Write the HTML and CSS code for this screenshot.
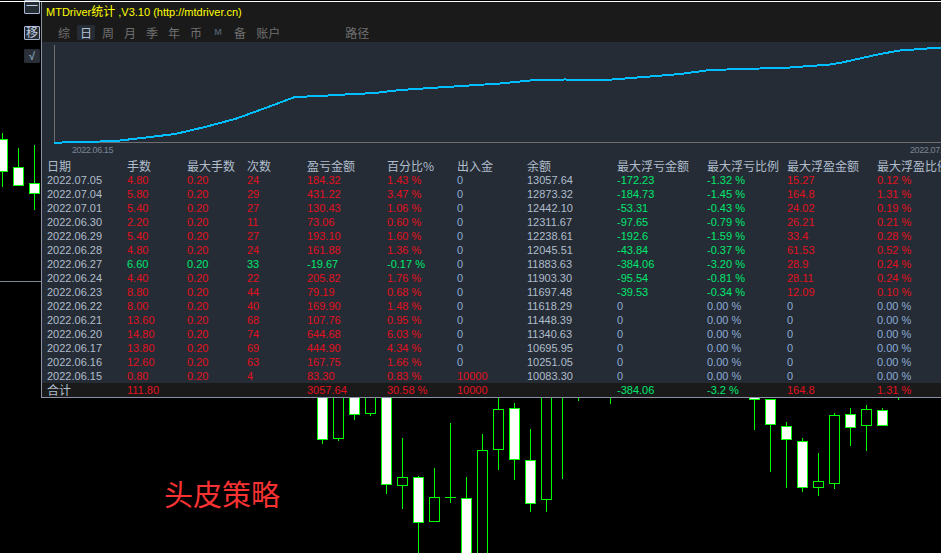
FILE: index.html
```html
<!DOCTYPE html>
<html lang="zh">
<head>
<meta charset="utf-8">
<title>MTDriver统计</title>
<link rel="stylesheet" href="styles.css">
</head>
<body>
<svg class="market" width="941" height="553" viewBox="0 0 941 553">
  <g class="wicks">
    <path d="M2.5 133V187M18.5 148V167M18.5 185V185M34.5 145V183M34.5 193V210"/>
    <path d="M322.5 439V444M338.5 438V441M354.5 414V420M370.5 413V416M386.5 484V494"/>
    <path d="M402.5 438V477M402.5 485V509M418.5 476V477M418.5 522V553M434.5 468V497"/>
    <path d="M450.5 423V503M445 497.5H456M466.5 477V498M482.5 434V450M498.5 397V409M498.5 449V470"/>
    <path d="M514.5 403V408M514.5 459V480M530.5 429V460M530.5 503V512M546.5 499V512M562.5 397V479"/>
    <path d="M578.5 397V401M610.5 397V404M754.5 400V430M770.5 424V472M786.5 422V426M786.5 439V488"/>
    <path d="M802.5 438V441M802.5 487V492M818.5 453V481M818.5 487V496M834.5 413V415M834.5 483V489"/>
    <path d="M850.5 408V414M850.5 427V446M866.5 405V409M866.5 425V451M882.5 408V410M898.5 397V400"/>
  </g>
  <g class="bull">
    <rect x="-2.5" y="139.5" width="10" height="32"/><rect x="13.5" y="167.5" width="10" height="18"/><rect x="29.5" y="183.5" width="10" height="10"/>
    <rect x="317.5" y="390.5" width="10" height="49"/><rect x="349.5" y="390.5" width="10" height="24"/><rect x="381.5" y="390.5" width="10" height="94"/>
    <rect x="413.5" y="477.5" width="10" height="45"/><rect x="461.5" y="498.5" width="10" height="60"/><rect x="509.5" y="408.5" width="10" height="51"/>
    <rect x="525.5" y="460.5" width="10" height="43"/><rect x="749.5" y="390.5" width="10" height="9"/><rect x="765.5" y="399.5" width="10" height="25"/>
    <rect x="781.5" y="426.5" width="10" height="13"/><rect x="797.5" y="441.5" width="10" height="46"/><rect x="845.5" y="414.5" width="10" height="13"/>
    <rect x="877.5" y="410.5" width="10" height="15"/>
  </g>
  <g class="bear">
    <rect x="333.5" y="390.5" width="10" height="48"/><rect x="365.5" y="390.5" width="10" height="23"/><rect x="397.5" y="477.5" width="10" height="8"/>
    <rect x="429.5" y="497.5" width="10" height="24"/><rect x="477.5" y="450.5" width="10" height="110"/><rect x="493.5" y="409.5" width="10" height="40"/>
    <rect x="541.5" y="390.5" width="10" height="109"/><rect x="813.5" y="481.5" width="10" height="6"/><rect x="829.5" y="415.5" width="10" height="68"/>
    <rect x="861.5" y="409.5" width="10" height="16"/>
  </g>
  <path class="gridline" d="M0 281.5H41"/>
</svg>

<div class="topline"></div>

<div class="sidebtn sidebtn-min">一</div>
<div class="sidebtn sidebtn-move">移</div>
<div class="sidebtn sidebtn-check">√</div>

<div class="caption">头皮策略</div>

<section class="panel">
  <header class="titlebar">MTDriver<span class="title-cjk">统计</span> ,V3.10 (http://mtdriver.cn)</header>
  <nav class="tabs">
    <span class="tab">综</span><span class="tab tab-on">日</span><span class="tab">周</span><span class="tab">月</span><span class="tab">季</span><span class="tab">年</span><span class="tab">币</span><span class="tab tab-m">M</span><span class="tab">备</span><span class="tab">账户</span><span class="tab tab-path">路径</span>
  </nav>
  <div class="chart">
    <svg class="chart-svg" width="899" height="117" viewBox="42 42 899 117">
      <path class="axis" d="M54.5 45V142.5H941"/>
      <polyline class="curve" points="54,143 70,142 100,141.5 120,140.5 150,137 175,134 205,127 235,119 260,110 295,97 320,96 345,94.5 375,93 400,90 500,83.5 530,80.5 565,79.5 600,80.5 625,78.5 650,76.5 680,74 710,70 760,68.5 790,67.5 810,66 830,64.5 842,62.5 880,54 900,50.5 941,47.5"/>
      <text class="axis-label" x="72" y="153">2022.06.15</text>
      <text class="axis-label" x="910" y="153">2022.07.05</text>
    </svg>
  </div>
  <div class="table">
    <div class="row head"><span>日期</span><span>手数</span><span>最大手数</span><span>次数</span><span>盈亏金额</span><span>百分比%</span><span>出入金</span><span>余额</span><span>最大浮亏金额</span><span>最大浮亏比例</span><span>最大浮盈金额</span><span>最大浮盈比例</span></div>
    <div class="row"><span>2022.07.05</span><span class="r">4.80</span><span class="r">0.20</span><span class="r">24</span><span class="r">184.32</span><span class="r">1.43 %</span><span class="b">0</span><span>13057.64</span><span class="g">-172.23</span><span class="g">-1.32 %</span><span class="r">15.27</span><span class="r">0.12 %</span></div>
    <div class="row"><span>2022.07.04</span><span class="r">5.80</span><span class="r">0.20</span><span class="r">29</span><span class="r">431.22</span><span class="r">3.47 %</span><span class="b">0</span><span>12873.32</span><span class="g">-184.73</span><span class="g">-1.45 %</span><span class="r">164.8</span><span class="r">1.31 %</span></div>
    <div class="row"><span>2022.07.01</span><span class="r">5.40</span><span class="r">0.20</span><span class="r">27</span><span class="r">130.43</span><span class="r">1.06 %</span><span class="b">0</span><span>12442.10</span><span class="g">-53.31</span><span class="g">-0.43 %</span><span class="r">24.02</span><span class="r">0.19 %</span></div>
    <div class="row"><span>2022.06.30</span><span class="r">2.20</span><span class="r">0.20</span><span class="r">11</span><span class="r">73.06</span><span class="r">0.60 %</span><span class="b">0</span><span>12311.67</span><span class="g">-97.65</span><span class="g">-0.79 %</span><span class="r">26.21</span><span class="r">0.21 %</span></div>
    <div class="row"><span>2022.06.29</span><span class="r">5.40</span><span class="r">0.20</span><span class="r">27</span><span class="r">193.10</span><span class="r">1.60 %</span><span class="b">0</span><span>12238.61</span><span class="g">-192.6</span><span class="g">-1.59 %</span><span class="r">33.4</span><span class="r">0.28 %</span></div>
    <div class="row"><span>2022.06.28</span><span class="r">4.80</span><span class="r">0.20</span><span class="r">24</span><span class="r">161.88</span><span class="r">1.36 %</span><span class="b">0</span><span>12045.51</span><span class="g">-43.84</span><span class="g">-0.37 %</span><span class="r">61.53</span><span class="r">0.52 %</span></div>
    <div class="row"><span>2022.06.27</span><span class="g">6.60</span><span class="g">0.20</span><span class="g">33</span><span class="g">-19.67</span><span class="g">-0.17 %</span><span class="b">0</span><span>11883.63</span><span class="g">-384.06</span><span class="g">-3.20 %</span><span class="r">28.9</span><span class="r">0.24 %</span></div>
    <div class="row"><span>2022.06.24</span><span class="r">4.40</span><span class="r">0.20</span><span class="r">22</span><span class="r">205.82</span><span class="r">1.76 %</span><span class="b">0</span><span>11903.30</span><span class="g">-95.54</span><span class="g">-0.81 %</span><span class="r">28.11</span><span class="r">0.24 %</span></div>
    <div class="row"><span>2022.06.23</span><span class="r">8.80</span><span class="r">0.20</span><span class="r">44</span><span class="r">79.19</span><span class="r">0.68 %</span><span class="b">0</span><span>11697.48</span><span class="g">-39.53</span><span class="g">-0.34 %</span><span class="r">12.09</span><span class="r">0.10 %</span></div>
    <div class="row"><span>2022.06.22</span><span class="r">8.00</span><span class="r">0.20</span><span class="r">40</span><span class="r">169.90</span><span class="r">1.48 %</span><span class="b">0</span><span>11618.29</span><span class="b">0</span><span class="b">0.00 %</span><span class="b">0</span><span class="b">0.00 %</span></div>
    <div class="row"><span>2022.06.21</span><span class="r">13.60</span><span class="r">0.20</span><span class="r">68</span><span class="r">107.76</span><span class="r">0.95 %</span><span class="b">0</span><span>11448.39</span><span class="b">0</span><span class="b">0.00 %</span><span class="b">0</span><span class="b">0.00 %</span></div>
    <div class="row"><span>2022.06.20</span><span class="r">14.80</span><span class="r">0.20</span><span class="r">74</span><span class="r">644.68</span><span class="r">6.03 %</span><span class="b">0</span><span>11340.63</span><span class="b">0</span><span class="b">0.00 %</span><span class="b">0</span><span class="b">0.00 %</span></div>
    <div class="row"><span>2022.06.17</span><span class="r">13.80</span><span class="r">0.20</span><span class="r">69</span><span class="r">444.90</span><span class="r">4.34 %</span><span class="b">0</span><span>10695.95</span><span class="b">0</span><span class="b">0.00 %</span><span class="b">0</span><span class="b">0.00 %</span></div>
    <div class="row"><span>2022.06.16</span><span class="r">12.60</span><span class="r">0.20</span><span class="r">63</span><span class="r">167.75</span><span class="r">1.66 %</span><span class="b">0</span><span>10251.05</span><span class="b">0</span><span class="b">0.00 %</span><span class="b">0</span><span class="b">0.00 %</span></div>
    <div class="row"><span>2022.06.15</span><span class="r">0.80</span><span class="r">0.20</span><span class="r">4</span><span class="r">83.30</span><span class="r">0.83 %</span><span class="r">10000</span><span>10083.30</span><span class="b">0</span><span class="b">0.00 %</span><span class="b">0</span><span class="b">0.00 %</span></div>
    <div class="row total"><span class="total-label">合计</span><span class="r">111.80</span><span></span><span></span><span class="r">3057.64</span><span class="r">30.58 %</span><span class="r">10000</span><span></span><span class="g">-384.06</span><span class="g">-3.2 %</span><span class="r">164.8</span><span class="r">1.31 %</span></div>
  </div>
</section>
</body>
</html>
```

FILE: styles.css
```css
html, body {
  margin: 0;
  padding: 0;
  width: 941px;
  height: 553px;
  overflow: hidden;
  background: #000;
}
body {
  position: relative;
  font-family: "Liberation Sans", "Noto Sans CJK SC", sans-serif;
}
.market {
  position: absolute;
  left: 0;
  top: 0;
  shape-rendering: crispEdges;
}
.wicks path { fill: none; stroke: #00ff00; stroke-width: 1; }
.bull rect { fill: #fff; stroke: #00ff00; stroke-width: 1; }
.bear rect { fill: #000; stroke: #00ff00; stroke-width: 1; }
.gridline { stroke: #7d8797; stroke-width: 1; fill: none; }

.topline {
  position: absolute;
  left: 0;
  top: 1px;
  width: 941px;
  height: 1px;
  background: #fff;
  z-index: 3;
}
.sidebtn {
  position: absolute;
  left: 24px;
  width: 16px;
  height: 14px;
  display: flex;
  align-items: center;
  justify-content: center;
  box-sizing: border-box;
  font-size: 12px;
  line-height: 12px;
  color: #c4d0e4;
  background: #252c35;
  border: 1px solid #a9b7d0;
  border-radius: 1px;
  z-index: 2;
}
.sidebtn-min { top: 0; }
.sidebtn-move { top: 26px; }
.sidebtn-check {
  top: 49px;
  border-color: #252c35;
  background: #2b3038;
  color: #7fa0b5;
  font-size: 11px;
  font-weight: 700;
}
.caption {
  position: absolute;
  left: 164px;
  top: 473px;
  font-family: "Noto Sans CJK SC", sans-serif;
  font-size: 29px;
  line-height: 40px;
  color: #f83232;
  white-space: nowrap;
}

.panel {
  position: absolute;
  left: 41px;
  top: 2px;
  width: 900px;
  height: 396px;
  box-sizing: border-box;
  display: flex;
  flex-direction: column;
  background: #1a1a1a;
  border-left: 1px solid #8a93a6;
  border-bottom: 1px solid #8a93a6;
  overflow: hidden;
}
.titlebar {
  height: 20px;
  padding-left: 4px;
  font-size: 11px;
  line-height: 18px;
  color: #ffff00;
  white-space: nowrap;
}
.title-cjk { font-family: "Noto Sans CJK SC", sans-serif; font-size: 12px; }
.tabs {
  height: 20px;
  display: flex;
  align-items: flex-start;
  padding-left: 11px;
  box-sizing: border-box;
}
.tab {
  margin: 3px 2px 0;
  padding: 0 3px;
  height: 15px;
  font-family: "Noto Sans CJK SC", sans-serif;
  font-size: 12px;
  line-height: 15px;
  color: #707070;
  border-radius: 2px;
  white-space: nowrap;
}
.tab-on { background: #252c35; color: #b4c2d2; }
.tab-m {
  font-family: "Liberation Sans", sans-serif;
  font-size: 9px;
  font-weight: 700;
  color: #4d5866;
  width: 12px;
  text-align: center;
}
.tab-path { margin-left: 57px; }

.chart { height: 117px; background: #252c35; }
.chart-svg { display: block; }
.axis { fill: none; stroke: #6e6e6e; stroke-width: 1; shape-rendering: crispEdges; }
.curve { fill: none; stroke: #00bfff; stroke-width: 2; shape-rendering: crispEdges; }
.axis-label { font-family: "Liberation Sans", sans-serif; font-size: 9px; letter-spacing: -0.4px; fill: #7a8595; }

.table { background: #252c35; flex: 1; }
.row {
  display: grid;
  grid-template-columns: 80px 60px 60px 60px 80px 70px 70px 90px 90px 80px 90px 90px;
  height: 14px;
  padding-left: 5px;
  font-size: 11px;
  line-height: 14px;
  color: #b0bdcc;
  white-space: nowrap;
}
.head { font-size: 12px; font-family: "Noto Sans CJK SC", sans-serif; }
.total { background: #1a1a1a; }
.total-label { font-family: "Noto Sans CJK SC", sans-serif; font-size: 12px; }
.r { color: #e2101f; }
.g { color: #00e66e; }
.b { color: #8cabd6; }
```
